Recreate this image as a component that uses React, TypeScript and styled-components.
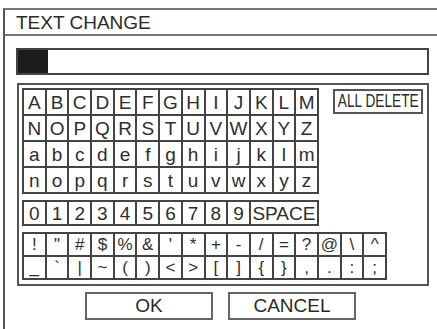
import styled, { createGlobalStyle } from 'styled-components';

const GlobalStyle = createGlobalStyle`
  html, body {
    margin: 0;
    padding: 0;
    background: #fff;
    overflow: hidden;
  }
  body {
    font-family: "Liberation Sans", Arial, sans-serif;
    color: #222;
  }
`;

const letters = [
  'ABCDEFGHIJKLM'.split(''),
  'NOPQRSTUVWXYZ'.split(''),
  'abcdefghijklm'.split(''),
  'nopqrstuvwxyz'.split(''),
];

const digits = '0123456789'.split('');

const symbols = [
  ['!', '"', '#', '$', '%', '&', "'", '*', '+', '-', '/', '=', '?', '@', '\\', '^'],
  ['_', '`', '|', '~', '(', ')', '<', '>', '[', ']', '{', '}', ',', '.', ':', ';'],
];

export default function App() {
  return (
    <>
      <GlobalStyle />
      <Frame>
        <TitleBar>TEXT CHANGE</TitleBar>
        <Body>
          <InputBox>
            <Cursor />
          </InputBox>
          <Keyboard>
            <TopSection>
              <Grid cols={13} rowHeight={26}>
                {letters.flat().map((ch, i) => (
                  <Cell key={i}>{ch}</Cell>
                ))}
              </Grid>
              <DeleteButton>
                <Narrow>ALL DELETE</Narrow>
              </DeleteButton>
            </TopSection>
            <Grid cols={13} rowHeight={24}>
              {digits.map(d => (
                <Cell key={d}>{d}</Cell>
              ))}
              <Cell span={3}>SPACE</Cell>
            </Grid>
            <Grid cols={16} rowHeight={23}>
              {symbols.flat().map((ch, i) => (
                <Cell key={i} small>{ch}</Cell>
              ))}
            </Grid>
          </Keyboard>
          <Buttons>
            <Button>OK</Button>
            <Button>CANCEL</Button>
          </Buttons>
        </Body>
      </Frame>
    </>
  );
}

const Frame = styled.div`
  box-sizing: border-box;
  margin: 8px 0 0 3px;
  width: 434px;
  height: 321px;
  border-left: 2px solid #555;
  border-top: 2px solid #777;
  display: flex;
  flex-direction: column;
  overflow: hidden;
`;

const TitleBar = styled.div`
  height: 22px;
  padding: 2px 0 0 11px;
  font-size: 19px;
  line-height: 22px;
  color: #2a2a2a;
  border-bottom: 2px solid #777;
`;

const Body = styled.div`
  display: flex;
  flex-direction: column;
  padding: 12px 0 0 11px;
`;

const InputBox = styled.div`
  box-sizing: border-box;
  width: 413px;
  height: 27px;
  border: 2px solid #444;
  display: flex;
`;

const Cursor = styled.div`
  width: 30px;
  height: 100%;
  background: #1e1c1d;
`;

const Keyboard = styled.div`
  box-sizing: border-box;
  margin: 8px 0 0 1px;
  width: 412px;
  height: 203px;
  border: 2px solid #555;
  padding: 3px 3px 0 3px;
  display: flex;
  flex-direction: column;
  gap: 6px;
`;

const TopSection = styled.div`
  display: flex;
  align-items: flex-start;
`;

const Grid = styled.div<{ cols: number; rowHeight: number }>`
  display: grid;
  grid-template-columns: repeat(${p => p.cols}, 22.7px);
  grid-auto-rows: ${p => p.rowHeight}px;
  border-left: 2px solid #444;
  border-top: 2px solid #444;
  align-self: flex-start;
`;

const Cell = styled.div<{ span?: number; small?: boolean }>`
  grid-column: span ${p => p.span ?? 1};
  box-sizing: border-box;
  border-right: 2px solid #444;
  border-bottom: 2px solid #444;
  display: flex;
  align-items: center;
  justify-content: center;
  font-size: ${p => (p.small ? 17 : 19)}px;
  color: #2e2e2e;
  line-height: 1;
`;

const DeleteButton = styled.div`
  box-sizing: border-box;
  margin: 1px 1px 0 auto;
  width: 90px;
  height: 25px;
  border: 2px solid #555;
  display: flex;
  align-items: center;
  justify-content: center;
  overflow: hidden;
`;

const Narrow = styled.span`
  display: inline-block;
  font-size: 18px;
  color: #2a2a2a;
  white-space: nowrap;
  transform: scaleX(0.76);
`;

const Buttons = styled.div`
  display: flex;
  gap: 15px;
  margin: 6px 0 0 69px;
`;

const Button = styled.div`
  box-sizing: border-box;
  width: 128px;
  height: 28px;
  border: 2px solid #666;
  display: flex;
  align-items: center;
  justify-content: center;
  font-size: 19px;
  color: #2a2a2a;
`;
